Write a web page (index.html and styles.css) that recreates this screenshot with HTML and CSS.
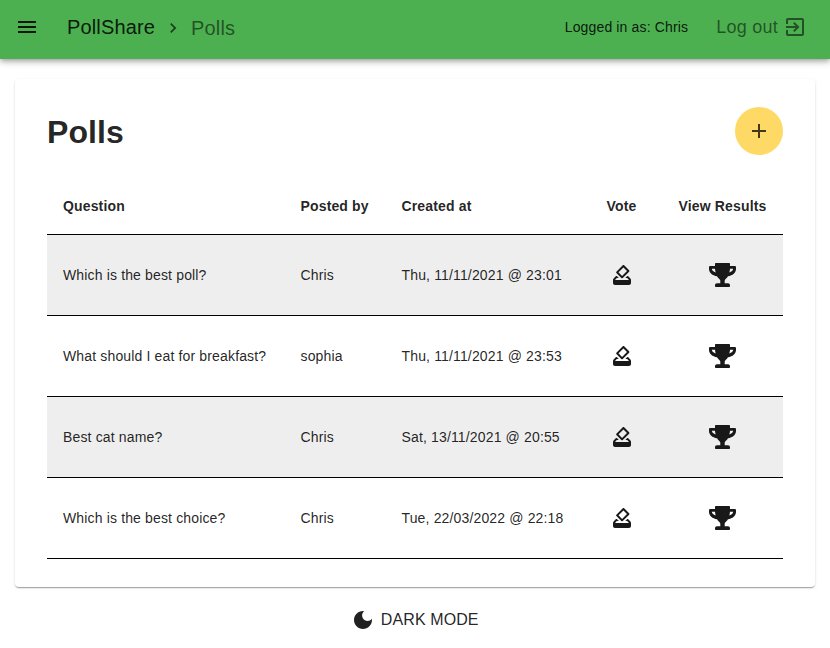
FILE: index.html
```html
<!DOCTYPE html>
<html lang="en">
<head>
<meta charset="utf-8">
<title>PollShare</title>
<link rel="stylesheet" href="styles.css">
</head>
<body>
<svg class="defs" aria-hidden="true">
  <symbol id="vote" viewBox="0 0 24 24"><path d="M18 13h-.68l-2 2h1.910L19 17H5l1.780-2h2.050l-2-2H6L3.600 15.400Q3 16 3 16.900V20c0 1.100.890 2 1.990 2H19c1.100 0 2-.890 2-2v-3.100Q21 16 20.400 15.400zm-1-5.050l-4.950 4.950-3.540-3.540 4.950-4.950L17 7.950zm-4.240-5.660L6.390 8.660c-.39.39-.39 1.020 0 1.410l4.950 4.950c.39.39 1.020.39 1.410 0l6.360-6.360c.39-.39.39-1.020 0-1.410L14.160 2.300c-.38-.4-1.010-.4-1.400-.01z"/></symbol>
  <symbol id="trophy" viewBox="0 0 27 24"><path fill-rule="evenodd" d="M7 0h13c.6 0 1 .4 1 1v2h4.700c.8 0 1.300.5 1.300 1.300V6c0 3.600-3.400 6.600-8 7.300-1.200 2-3.300 3.500-3.300 4.200v2.800H19c1.200 0 2 .8 2 2V23c0 .6-.4 1-1 1H7c-.6 0-1-.4-1-1v-.7c0-1.200.8-2 2-2h3.300v-2.800c0-.7-2.100-2.200-3.300-4.200C3.400 12.600 0 9.600 0 6V4.300C0 3.500.5 3 1.300 3H6V1c0-.6.4-1 1-1zM2.900 5.800C2.900 7.300 4.500 8.900 6.700 9.600 6.300 8.400 6.100 7.200 6 5.800zM24.100 5.800H21C20.900 7.200 20.700 8.400 20.300 9.600 22.500 8.900 24.100 7.300 24.100 5.800z"/></symbol>
</svg>
<header class="bar">
  <svg class="icon menu" viewBox="0 0 24 24"><path d="M3 18h18v-2H3v2zm0-5h18v-2H3v2zm0-7v2h18V6H3z"/></svg>
  <span class="brand">PollShare</span>
  <svg class="chevron" viewBox="0 0 24 24"><path d="M10 6L8.590 7.410 13.170 12l-4.580 4.590L10 18l6-6z"/></svg>
  <span class="crumb">Polls</span>
  <span class="user">Logged in as: Chris</span>
  <span class="logout">Log out</span>
  <svg class="icon exit" viewBox="0 0 24 24"><path d="M10.090 15.590L11.500 17l5-5-5-5-1.410 1.410L12.670 11H3v2h9.670l-2.580 2.590zM19 3H5c-1.110 0-2 .9-2 2v4h2V5h14v14H5v-4H3v4c0 1.100.890 2 2 2h14c1.100 0 2-.9 2-2V5c0-1.100-.9-2-2-2z"/></svg>
</header>
<main class="card">
  <div class="heading">
    <h1>Polls</h1>
    <button class="add" aria-label="Add"><svg class="icon" viewBox="0 0 24 24"><path d="M19 13h-6v6h-2v-6H5v-2h6V5h2v6h6v2z"/></svg></button>
  </div>
  <table>
    <colgroup><col class="c1"><col class="c2"><col class="c3"><col class="c4"><col class="c5"></colgroup>
    <thead><tr><th>Question</th><th>Posted by</th><th>Created at</th><th class="mid">Vote</th><th class="mid last">View Results</th></tr></thead>
    <tbody>
      <tr><td>Which is the best poll?</td><td>Chris</td><td>Thu, 11/11/2021 @ 23:01</td><td class="mid"><svg class="icon"><use href="#vote"/></svg></td><td class="mid last"><svg class="trophy"><use href="#trophy"/></svg></td></tr>
      <tr><td>What should I eat for breakfast?</td><td>sophia</td><td>Thu, 11/11/2021 @ 23:53</td><td class="mid"><svg class="icon"><use href="#vote"/></svg></td><td class="mid last"><svg class="trophy"><use href="#trophy"/></svg></td></tr>
      <tr><td>Best cat name?</td><td>Chris</td><td>Sat, 13/11/2021 @ 20:55</td><td class="mid"><svg class="icon"><use href="#vote"/></svg></td><td class="mid last"><svg class="trophy"><use href="#trophy"/></svg></td></tr>
      <tr><td>Which is the best choice?</td><td>Chris</td><td>Tue, 22/03/2022 @ 22:18</td><td class="mid"><svg class="icon"><use href="#vote"/></svg></td><td class="mid last"><svg class="trophy"><use href="#trophy"/></svg></td></tr>
    </tbody>
  </table>
</main>
<footer class="mode">
  <svg class="moon" viewBox="0 0 24 24"><path d="M12 3c-4.970 0-9 4.030-9 9s4.030 9 9 9 9-4.030 9-9c0-.460-.040-.920-.1-1.360-.980 1.370-2.580 2.260-4.400 2.260-2.980 0-5.400-2.420-5.400-5.400 0-1.810.890-3.420 2.260-4.400C12.920 3.040 12.460 3 12 3z"/></svg>
  <span>DARK MODE</span>
</footer>
</body>
</html>
```

FILE: styles.css
```css
* { box-sizing: border-box; }
body { margin: 0; background: #fff; color: rgba(0,0,0,.87); font-family: "Liberation Sans", Arial, sans-serif; font-size: 14px; }
svg { display: block; fill: currentColor; flex: none; }
.defs { position: absolute; width: 0; height: 0; }
.icon { width: 24px; height: 24px; }
.bar { height: 59px; padding: 0 23px 5px 15px; display: flex; align-items: center; background: #4caf50; box-shadow: 0 2px 4px -1px rgba(0,0,0,.2), 0 4px 5px rgba(0,0,0,.14), 0 1px 10px rgba(0,0,0,.12); white-space: nowrap; }
.brand { margin-left: 28px; font-size: 20px; letter-spacing: .15px; }
.chevron { width: 20px; height: 20px; margin: 2px 8px 0; opacity: .75; }
.crumb { margin-top: 2px; font-size: 20px; letter-spacing: .15px; color: rgba(0,0,0,.54); }
.user { margin-left: auto; letter-spacing: .15px; }
.logout { margin: 0 5px 0 28px; font-size: 18px; letter-spacing: .25px; color: rgba(0,0,0,.54); }
.exit { color: rgba(0,0,0,.54); }
.card { width: 800px; height: 508px; margin: 20px auto 0; padding: 28px 32px; border-radius: 4px; box-shadow: 0 2px 1px -1px rgba(0,0,0,.2), 0 1px 1px rgba(0,0,0,.14), 0 1px 3px rgba(0,0,0,.12); }
.heading { display: flex; justify-content: space-between; align-items: center; height: 48px; }
h1 { margin: 0; padding-top: 2px; font-size: 32px; line-height: 42px; letter-spacing: .1px; }
.add { display: flex; align-items: center; justify-content: center; width: 48px; height: 48px; padding: 0; border: 0; border-radius: 50%; color: rgba(0,0,0,.74); background: #ffd966; }
table { width: 736px; margin-top: 23px; border-collapse: collapse; table-layout: fixed; letter-spacing: .15px; line-height: 20px; }
.c1 { width: 237.500px; } .c2 { width: 101px; } .c3 { width: 194px; } .c4 { width: 84px; } .c5 { width: 119.500px; }
th, td { padding: 0 16px; text-align: left; white-space: nowrap; border-bottom: 1px solid #000; }
th { height: 56px; padding-top: 1px; font-weight: 700; }
td { height: 81px; }
th.mid, td.mid { padding-left: 0; padding-right: 0; text-align: center; }
th.last, td.last { padding-right: 1.500px; }
td svg { margin: 0 auto; color: rgba(0,0,0,.9); }
tbody tr:nth-child(odd) { background: #eee; }
.trophy { width: 27px; height: 24px; }
.mode { display: flex; justify-content: center; align-items: center; gap: 5.500px; margin-top: 21px; font-size: 16px; letter-spacing: .1px; }
.moon { width: 24px; height: 24px; }
```
